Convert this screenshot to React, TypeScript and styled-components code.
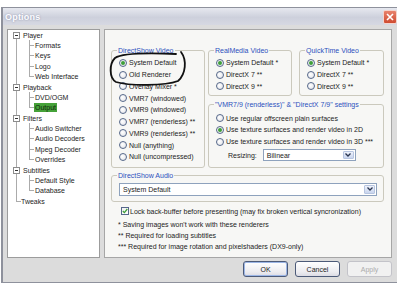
import React from 'react';
import styled, { createGlobalStyle } from 'styled-components';

const GlobalStyle = createGlobalStyle`
  html, body {
    margin: 0;
    padding: 0;
    background: #fff;
    overflow: hidden;
  }
  body {
    font-family: 'Liberation Sans', Arial, sans-serif;
    font-size: 7px;
    color: #1c1c1c;
  }
`;

const Screen = styled.div`
  width: 397px;
  height: 288px;
  padding: 7px 0 0 1px;
  box-sizing: border-box;
  overflow: hidden;
`;

const Window = styled.div`
  width: 400px;
  height: 276px;
  box-sizing: border-box;
  border: 1px solid #8e919c;
  border-left-width: 2px;
  border-right-width: 2px;
  background: #dcdcdc;
  display: flex;
  flex-direction: column;
`;

const TitleBar = styled.div`
  height: 17px;
  flex: none;
  display: flex;
  align-items: center;
  justify-content: space-between;
  padding: 0 2px 0 2px;
  background: linear-gradient(#e6e8ef, #cdd0dc 55%, #d6d8e2);
`;

const TitleText = styled.span`
  font-size: 9px;
  font-weight: bold;
  color: #fbfbff;
  text-shadow: 0 0 2px #8a90a8;
  letter-spacing: 0.2px;
`;

const CloseButton = styled.span`
  width: 14px;
  height: 14px;
  box-sizing: border-box;
  border: 1px solid #f4d4cc;
  border-radius: 2px;
  background: linear-gradient(#e8826c, #cf4b30);
  display: flex;
  align-items: center;
  justify-content: center;
`;

const Body = styled.div`
  flex: 1;
  padding: 4px 7px 5px 4px;
  display: flex;
  flex-direction: column;
`;

const Main = styled.div`
  height: 229px;
  display: flex;
  gap: 4px;
`;

const Tree = styled.div`
  width: 93px;
  flex: none;
  box-sizing: border-box;
  border: 1px solid #9c9c9c;
  background: #fff;
`;

const lineColor = '#ababab';
const layer = (pos: string) => `linear-gradient(${lineColor}, ${lineColor}) ${pos} no-repeat`;

type Trunk = 'full' | 'down' | 'up';
type Child = 'none' | 'full' | 'half';

const TreeRow = styled.div<{ $indent: number; $trunk: Trunk; $child: Child; $stub?: boolean }>`
  height: 10.375px;
  display: flex;
  align-items: center;
  gap: 2px;
  padding-left: ${(p) => p.$indent}px;
  background: ${(p) =>
    [
      p.$trunk === 'full' ? layer('8px 0 / 1px 100%') : p.$trunk === 'down' ? layer('8px 100% / 1px 50%') : layer('8px 0 / 1px 50%'),
      p.$stub ? layer('8px 50% / 5px 1px') : '',
      p.$child === 'full' ? layer('21px 0 / 1px 100%') : p.$child === 'half' ? layer('21px 0 / 1px 50%') : '',
      p.$child !== 'none' ? layer('21px 50% / 5px 1px') : '',
    ]
      .filter(Boolean)
      .join(', ')};
`;

const Expander = styled.span`
  width: 7px;
  height: 7px;
  box-sizing: border-box;
  border: 1px solid #8c8c8c;
  background: #fff;
  display: flex;
  align-items: center;
  justify-content: center;
  &::after {
    content: '';
    width: 3px;
    height: 1px;
    background: #333;
  }
`;

const NodeLabel = styled.span<{ $selected?: boolean }>`
  line-height: 9px;
  padding: 0 1px;
  white-space: nowrap;
  background: ${(p) => (p.$selected ? '#45a239' : 'transparent')};
  color: ${(p) => (p.$selected ? '#10230c' : '#1c1c1c')};
`;

const PropPage = styled.div`
  flex: 1;
  position: relative;
  box-sizing: border-box;
  border: 1px solid #a6a6a6;
  background: #f7f7f5;
  padding: 16px 7px 0 6px;
`;

const TopRow = styled.div`
  display: flex;
  gap: 3px;
  align-items: stretch;
`;

const RightCol = styled.div`
  width: 176px;
  display: flex;
  flex-direction: column;
  gap: 3.5px;
`;

const PlayerRow = styled.div`
  display: flex;
  gap: 7px;
`;

const Group = styled.fieldset<{ $w?: number; $pt?: number; $pb?: number }>`
  margin: 0;
  min-width: 0;
  box-sizing: border-box;
  ${(p) => (p.$w ? `width: ${p.$w}px; flex: none;` : '')}
  border: 1px solid #cbc9bd;
  border-radius: 3px;
  padding: ${(p) => p.$pt ?? 2}px 6px ${(p) => p.$pb ?? 3}px 7px;
`;

const Legend = styled.legend`
  margin-left: -2px;
  padding: 0 1px;
  line-height: 9px;
  color: #2c50bd;
  white-space: nowrap;
`;

const Option = styled.div<{ $inset?: number }>`
  height: 11.75px;
  display: flex;
  align-items: center;
  gap: 2px;
  padding-left: ${(p) => p.$inset ?? 0}px;
  white-space: nowrap;
`;

const Radio = styled.span<{ $on?: boolean }>`
  width: 8px;
  height: 8px;
  flex: none;
  box-sizing: border-box;
  border-radius: 50%;
  border: 1px solid #56688a;
  background: radial-gradient(circle at 40% 40%, #ffffff, #dfe0e6);
  display: flex;
  align-items: center;
  justify-content: center;
  &::after {
    content: '';
    width: 4px;
    height: 4px;
    border-radius: 50%;
    background: ${(p) => (p.$on ? '#3e9f39' : 'transparent')};
  }
`;

const ResizeRow = styled.div`
  height: 15px;
  display: flex;
  align-items: center;
  gap: 6px;
  padding-left: 12px;
`;

const Select = styled.div<{ $w?: number; $h: number }>`
  ${(p) => (p.$w ? `width: ${p.$w}px;` : 'flex: 1;')}
  height: ${(p) => p.$h}px;
  box-sizing: border-box;
  border: 1px solid #8ea2bd;
  background: #fff;
  display: flex;
  align-items: center;
  justify-content: space-between;
  padding: 1px 1px 1px 3px;
`;

const SelectArrow = styled.span`
  width: 11px;
  align-self: stretch;
  box-sizing: border-box;
  border: 1px solid #b7c5e0;
  border-radius: 1px;
  background: linear-gradient(#eef2fb, #c9d5ee);
  display: flex;
  align-items: center;
  justify-content: center;
`;

const CheckRow = styled.div`
  height: 11px;
  margin-top: 4px;
  padding-left: 10px;
  display: flex;
  align-items: center;
  gap: 1px;
  white-space: nowrap;
`;

const CheckBox = styled.span`
  width: 8px;
  height: 8px;
  flex: none;
  box-sizing: border-box;
  border: 1px solid #56688a;
  background: linear-gradient(135deg, #f0f0f0, #ffffff);
  display: flex;
  align-items: center;
  justify-content: center;
`;

const Notes = styled.div`
  margin-top: 2px;
  padding-left: 7px;
`;

const Note = styled.div`
  height: 11px;
  line-height: 11px;
  white-space: nowrap;
`;

const Scribble = styled.svg`
  position: absolute;
  left: -1px;
  top: -1px;
  width: 288px;
  height: 229px;
  pointer-events: none;
`;

const ButtonRow = styled.div`
  margin-top: 3px;
  display: flex;
  justify-content: flex-end;
  gap: 7px;
`;

const Button = styled.span<{ $default?: boolean; $disabled?: boolean }>`
  width: 45px;
  height: 16px;
  box-sizing: border-box;
  border-radius: 3px;
  border: 1px solid ${(p) => (p.$disabled ? '#c3c3c9' : '#4c5a78')};
  background: ${(p) => (p.$disabled ? '#f1f1f1' : 'linear-gradient(#ffffff, #ececf0 70%, #dcdce4)')};
  box-shadow: ${(p) => (p.$default ? 'inset 0 0 0 1px #9cb6e6' : 'none')};
  color: ${(p) => (p.$disabled ? '#ababab' : '#1c1c1c')};
  display: flex;
  align-items: center;
  justify-content: center;
`;

const treeItems: { label: string; root?: boolean; last?: boolean; selected?: boolean }[] = [
  { label: 'Player', root: true },
  { label: 'Formats' },
  { label: 'Keys' },
  { label: 'Logo' },
  { label: 'Web Interface', last: true },
  { label: 'Playback', root: true },
  { label: 'DVD/OGM' },
  { label: 'Output', last: true, selected: true },
  { label: 'Filters', root: true },
  { label: 'Audio Switcher' },
  { label: 'Audio Decoders' },
  { label: 'Mpeg Decoder' },
  { label: 'Overrides', last: true },
  { label: 'Subtitles', root: true },
  { label: 'Default Style' },
  { label: 'Database', last: true },
  { label: 'Tweaks' },
];

const directShow = [
  'System Default',
  'Old Renderer',
  'Overlay Mixer *',
  'VMR7 (windowed)',
  'VMR9 (windowed)',
  'VMR7 (renderless) **',
  'VMR9 (renderless) **',
  'Null (anything)',
  'Null (uncompressed)',
];

const otherVideo = ['System Default *', 'DirectX 7 **', 'DirectX 9 **'];

const surfaces = [
  'Use regular offscreen plain surfaces',
  'Use texture surfaces and render video in 2D',
  'Use texture surfaces and render video in 3D ***',
];

const Chevron = () => (
  <svg width="6" height="4" viewBox="0 0 6 4">
    <path d="M0.5 0.5 L3 3 L5.5 0.5" fill="none" stroke="#2a3550" strokeWidth="1.3" />
  </svg>
);

const App: React.FC = () => {
  return (
    <Screen>
      <GlobalStyle />
      <Window>
        <TitleBar>
          <TitleText>Options</TitleText>
          <CloseButton>
            <svg width="8" height="8" viewBox="0 0 8 8">
              <path d="M1 1 L7 7 M7 1 L1 7" stroke="#fff" strokeWidth="1.6" />
            </svg>
          </CloseButton>
        </TitleBar>
        <Body>
          <Main>
            <Tree>
              {treeItems.map((item, i) => {
                const isTweaks = item.label === 'Tweaks';
                const trunk: Trunk = i === 0 ? 'down' : isTweaks ? 'up' : 'full';
                const isChild = !item.root && !isTweaks;
                return (
                  <TreeRow
                    key={item.label}
                    $indent={item.root ? 5 : isTweaks ? 12 : 26}
                    $trunk={trunk}
                    $child={isChild ? (item.last ? 'half' : 'full') : 'none'}
                    $stub={isTweaks}
                  >
                    {item.root && <Expander />}
                    <NodeLabel $selected={item.selected}>{item.label}</NodeLabel>
                  </TreeRow>
                );
              })}
            </Tree>
            <PropPage>
              <TopRow>
                <Group $w={94} $pb={4}>
                  <Legend>DirectShow Video</Legend>
                  {directShow.map((label, i) => (
                    <Option key={label}>
                      <Radio $on={i === 0} />
                      {label}
                    </Option>
                  ))}
                </Group>
                <RightCol>
                  <PlayerRow>
                    <Group $w={84}>
                      <Legend>RealMedia Video</Legend>
                      {otherVideo.map((label, i) => (
                        <Option key={label}>
                          <Radio $on={i === 0} />
                          {label}
                        </Option>
                      ))}
                    </Group>
                    <Group $w={85}>
                      <Legend>QuickTime Video</Legend>
                      {otherVideo.map((label, i) => (
                        <Option key={label}>
                          <Radio $on={i === 0} />
                          {label}
                        </Option>
                      ))}
                    </Group>
                  </PlayerRow>
                  <Group $pt={3.5} $pb={4}>
                    <Legend>"VMR7/9 (renderless)" &amp; "DirectX 7/9" settings</Legend>
                    {surfaces.map((label, i) => (
                      <Option key={label}>
                        <Radio $on={i === 1} />
                        {label}
                      </Option>
                    ))}
                    <ResizeRow>
                      Resizing:
                      <Select $w={93} $h={12}>
                        Bilinear
                        <SelectArrow>
                          <Chevron />
                        </SelectArrow>
                      </Select>
                    </ResizeRow>
                  </Group>
                </RightCol>
              </TopRow>
              <Group $pt={2.5} $pb={5} style={{ marginTop: 3.5 }}>
                <Legend>DirectShow Audio</Legend>
                <Select $h={13}>
                  System Default
                  <SelectArrow>
                    <Chevron />
                  </SelectArrow>
                </Select>
              </Group>
              <CheckRow>
                <CheckBox>
                  <svg width="6" height="6" viewBox="0 0 6 6">
                    <path d="M0.8 3 L2.4 4.6 L5.3 1" fill="none" stroke="#3e9f39" strokeWidth="1.3" />
                  </svg>
                </CheckBox>
                Lock back-buffer before presenting (may fix broken vertical syncronization)
              </CheckRow>
              <Notes>
                <Note>* Saving images won't work with these renderers</Note>
                <Note>** Required for loading subtitles</Note>
                <Note>*** Required for image rotation and pixelshaders (DX9-only)</Note>
              </Notes>
              <Scribble viewBox="0 0 288 229">
                <path
                  d="M77 23 C83 31, 82 45, 74 52 C61 57, 26 57, 12 53 C5 49, 5 35, 11 29 C18 24, 48 24, 72 25"
                  fill="none"
                  stroke="#111"
                  strokeWidth="1.8"
                  strokeLinecap="round"
                />
              </Scribble>
            </PropPage>
          </Main>
          <ButtonRow>
            <Button $default>OK</Button>
            <Button>Cancel</Button>
            <Button $disabled>Apply</Button>
          </ButtonRow>
        </Body>
      </Window>
    </Screen>
  );
};

export default App;
